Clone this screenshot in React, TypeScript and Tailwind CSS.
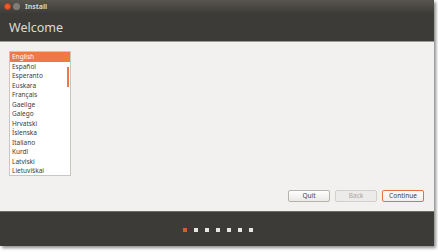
const languages = [
  "English",
  "Español",
  "Esperanto",
  "Euskara",
  "Français",
  "Gaeilge",
  "Galego",
  "Hrvatski",
  "Íslenska",
  "Italiano",
  "Kurdî",
  "Latviski",
  "Lietuviškai",
];

function StepDots() {
  return (
    <div className="flex items-center gap-[7px] pl-[183px] pt-[16px]">
      <span className="w-[4px] h-[4px] bg-[#e05a28]" />
      {[1, 2, 3, 4, 5, 6].map((i) => (
        <span key={i} className="w-[4px] h-[4px] bg-[#e8e6e2]" />
      ))}
    </div>
  );
}

export default function App() {
  return (
    <div
      className="w-[438px] h-[252px] bg-white overflow-hidden"
      style={{ fontFamily: '"Noto Sans", "DejaVu Sans", sans-serif' }}
    >
      <div className="w-[434px] h-[246px] flex flex-col shadow-[2px_2px_3px_rgba(0,0,0,0.45)]">
        {/* title bar */}
        <div className="h-[13px] flex items-center gap-[2px] pl-[4px] bg-gradient-to-b from-[#57544d] to-[#3e3d39]">
          <span className="w-[7px] h-[7px] rounded-full bg-[#ef5a2c] border border-[#b9401b]" />
          <span className="w-[7px] h-[7px] rounded-full bg-[#807d77]" />
          <span className="ml-[3px] text-[7px] font-bold text-[#d7d3cb] leading-none">Install</span>
        </div>
        {/* header */}
        <div className="h-[29px] bg-[#3c3b37] flex items-center pl-[9px] pt-[2px] border-b border-[#9c9a94]">
          <span className="text-[12.5px] text-[#dfdbd2] leading-none">Welcome</span>
        </div>
        {/* content */}
        <div className="flex-1 bg-[#f2f1f0] flex justify-between px-[9px] pt-[9px] pb-[9px] pr-[10px]">
          <div className="relative w-[62px] h-[125px] bg-white border border-[#c9c6c1] overflow-hidden">
            {languages.map((lang, i) => (
              <div
                key={lang}
                className={
                  i === 0
                    ? "h-[9.5px] leading-[9.5px] pl-[2px] text-[6.5px] bg-[#f07746] text-white"
                    : "h-[9.5px] leading-[9.5px] pl-[2px] text-[6.5px] text-[#3c3c3c]"
                }
              >
                {lang}
              </div>
            ))}
            <span className="absolute right-[1px] top-[15px] w-[2px] h-[20px] bg-[#f07746]" />
          </div>
          <div className="self-end flex gap-[5px]">
            <button className="w-[42px] h-[12px] rounded-[2px] border border-[#b6b3ad] bg-gradient-to-b from-white to-[#ebe9e6] text-[6.5px] text-[#3c3c3c] leading-none">
              Quit
            </button>
            <button className="w-[42px] h-[12px] rounded-[2px] border border-[#d3d0cb] bg-[#ecebe9] text-[6.5px] text-[#a9a6a1] leading-none">
              Back
            </button>
            <button className="w-[42px] h-[12px] rounded-[2px] border border-[#e86f3f] bg-gradient-to-b from-white to-[#f1efec] text-[6.5px] text-[#3c3c3c] leading-none">
              Continue
            </button>
          </div>
        </div>
        {/* bottom bar */}
        <div className="h-[35px] bg-[#3c3b37] border-t border-[#6f6d68]">
          <StepDots />
        </div>
      </div>
    </div>
  );
}
